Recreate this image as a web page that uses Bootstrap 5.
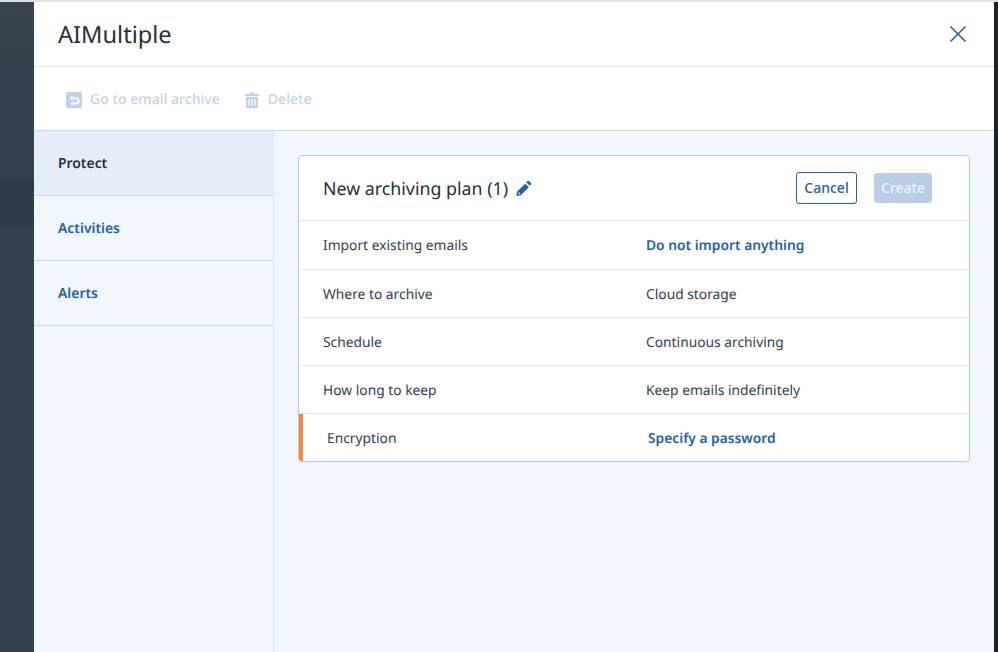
<!DOCTYPE html>
<html lang="en">
<head>
    <title>AIMultiple</title>
    <link rel="stylesheet" href="https://cdn.jsdelivr.net/npm/bootstrap@5.3.0/dist/css/bootstrap.min.css">
    <style>
        html, body {
            height: 100%;
            overflow: hidden;
        }
        body {
            font-family: "Noto Sans", "Open Sans", sans-serif;
            font-size: 13.8px;
            color: #33404f;
            background: #fff;
            text-rendering: geometricPrecision;
        }
        .page-wrap {
            height: 652px;
            padding-top: 2px;
            background: linear-gradient(#dfe1e4 0, #dfe1e4 2px, transparent 2px);
        }
        .back-strip {
            width: 34px;
            background: linear-gradient(#3b444f 0, #36424f 80px, #33404f 177px, #2e3b4b 177px, #2e3b4b 225px, #33404f 225px, #33404f 100%);
        }
        .edge-strip {
            width: 4px;
            background: #1f2328;
        }
        .panel-head {
            height: 65px;
            padding: 0 27px 0 24px;
            border-bottom: 1px solid #dde6f1;
        }
        .panel-title {
            font-size: 23.6px;
            font-weight: 400;
            color: #24303e;
            margin: 0;
        }
        .tool-row {
            height: 64px;
            padding-left: 32px;
            gap: 24px;
            border-bottom: 1px solid #cbd9e9;
            color: #c2d1e7;
            font-size: 14.1px;
            font-weight: 500;
        }
        .tool-row span {
            line-height: 22px;
            padding-top: 2px;
        }
        .side-menu {
            width: 240px;
            background: #f1f5fc;
            border-right: 1px solid #dde6f1;
        }
        .side-item {
            display: block;
            height: 65px;
            line-height: 66px;
            padding-left: 24px;
            border-bottom: 1px solid #cbd9e9;
            color: #2360aa;
            font-size: 13.9px;
            font-weight: 600;
            text-decoration: none;
        }
        .side-item.active-item {
            background: #e6edf8;
            color: #24303e;
        }
        .work-area {
            background: #f1f5fc;
            padding: 24px 24px 0 24px;
        }
        .plan-box {
            background: #fff;
            border: 1px solid #b4c8de;
            border-radius: 4px;
            overflow: hidden;
        }
        .plan-head {
            height: 65px;
            padding: 0 37px 0 24px;
            border-bottom: 1px solid #dde6f1;
        }
        .plan-title {
            font-size: 17.8px;
            font-weight: 400;
            color: #24303e;
            margin: 3px 0 0;
        }
        .btn-cancel, .btn-create {
            height: 32px;
            padding: 0 0 2px;
            font-size: 14px;
            font-weight: 500;
            border-radius: 3px;
        }
        .btn-cancel {
            width: 61px;
            color: #2360aa;
            background: #fff;
            border: 1px solid #2360aa;
        }
        .btn-create {
            width: 58px;
            margin-left: 17px;
            height: 30px;
            color: #edf2fa;
            background: #bbcde6;
            border: 0;
        }
        .plan-row {
            height: 48px;
            padding: 3px 0 0 24px;
            border-bottom: 1px solid #dde6f1;
        }
        .plan-row.tall-row {
            height: 49px;
        }
        .plan-row:last-child {
            border-bottom: 0;
            height: 47px;
        }
        .row-name {
            width: 323px;
        }
        .row-link {
            color: #2360aa;
            font-weight: 600;
            text-decoration: none;
        }
        .warn-row {
            border-left: 4px solid #f5853b;
        }
        .warn-row .row-name {
            width: 321px;
        }
    </style>
</head>
<body>
<div class="page-wrap d-flex">
    <div class="back-strip flex-shrink-0"></div>
    <div class="flex-grow-1 d-flex flex-column bg-white">
        <div class="panel-head d-flex align-items-center justify-content-between">
            <h1 class="panel-title">AIMultiple</h1>
            <svg width="18" height="18" viewBox="0 0 18 18" fill="none" stroke="#2360aa" stroke-width="1.6">
                <path d="M1.5 1.5l15 15M16.500 1.500l-15 15"/>
            </svg>
        </div>
        <div class="tool-row d-flex align-items-center">
            <span class="d-flex align-items-center gap-2">
                <svg width="16" height="16" viewBox="0 0 16 16">
                    <rect width="16" height="16" rx="2" fill="#c2d1e7"/>
                    <path d="M6.500 3.500L3.500 6l3 2.500V7h3.500a1.500 1.500 0 0 1 0 3.500H5V12.500h5a3.500 3.500 0 0 0 0-7H6.500z" fill="#fff"/>
                </svg>
                Go to email archive
            </span>
            <span class="d-flex align-items-center gap-2">
                <svg width="16" height="16" viewBox="0 0 16 16">
                    <path d="M5.500 0.500h5V2H15v2H1V2h4.500zM2 5h12v11H2z" fill="#c2d1e7"/>
                    <path d="M5 7v6.500M8 7v6.500M11 7v6.500" stroke="#fff" stroke-width="1.300"/>
                </svg>
                Delete
            </span>
        </div>
        <div class="flex-grow-1 d-flex">
            <div class="side-menu flex-shrink-0">
                <a class="side-item active-item" href="#">Protect</a>
                <a class="side-item" href="#">Activities</a>
                <a class="side-item" href="#">Alerts</a>
            </div>
            <div class="work-area flex-grow-1">
                <div class="plan-box">
                    <div class="plan-head d-flex align-items-center justify-content-between">
                        <div class="d-flex align-items-center gap-2">
                            <h2 class="plan-title">New archiving plan (1)</h2>
                            <svg width="15" height="15" viewBox="0 0 15 15">
                                <path d="M11.200 0.300a1.500 1.500 0 0 1 2 0l1.500 1.500a1.500 1.500 0 0 1 0 2l-1 1-3.500-3.500z" fill="#2360aa"/>
                                <path d="M9.300 2.700l3.500 3.500-8 8-4.500 0.800 0.800-4.500zM3 11l-0.600 2.300 2.300-0.600z" fill="#2360aa" fill-rule="evenodd"/>
                            </svg>
                        </div>
                        <div class="d-flex align-items-center">
                            <button class="btn-cancel" type="button">Cancel</button>
                            <button class="btn-create" type="button">Create</button>
                        </div>
                    </div>
                    <div class="plan-row tall-row d-flex align-items-center">
                        <span class="row-name">Import existing emails</span>
                        <a class="row-link" href="#">Do not import anything</a>
                    </div>
                    <div class="plan-row d-flex align-items-center">
                        <span class="row-name">Where to archive</span>
                        <span>Cloud storage</span>
                    </div>
                    <div class="plan-row d-flex align-items-center">
                        <span class="row-name">Schedule</span>
                        <span>Continuous archiving</span>
                    </div>
                    <div class="plan-row d-flex align-items-center">
                        <span class="row-name">How long to keep</span>
                        <span>Keep emails indefinitely</span>
                    </div>
                    <div class="plan-row warn-row d-flex align-items-center">
                        <span class="row-name">Encryption</span>
                        <a class="row-link" href="#">Specify a password</a>
                    </div>
                </div>
            </div>
        </div>
    </div>
    <div class="edge-strip flex-shrink-0"></div>
</div>
<script src="https://cdn.jsdelivr.net/npm/bootstrap@5.3.0/dist/js/bootstrap.bundle.min.js"></script>
</body>
</html>
